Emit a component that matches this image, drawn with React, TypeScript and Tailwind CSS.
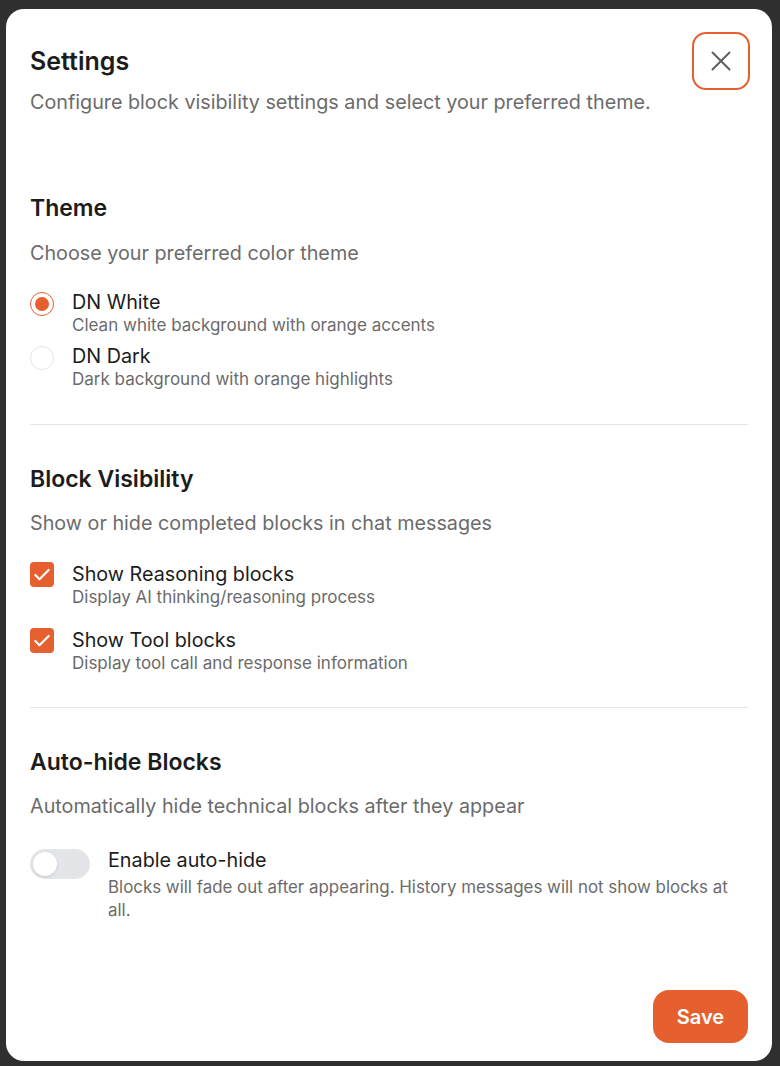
import { useState } from 'react';
import { Check } from 'lucide-react';

const ORANGE = 'bg-[#e5602e]';

function Radio({ checked, label, desc, onClick }: { checked: boolean; label: string; desc: string; onClick: () => void }) {
  return (
    <button onClick={onClick} className="flex items-start gap-[18px] text-left">
      <span
        className={`mt-[2px] w-6 h-6 shrink-0 rounded-full border flex items-center justify-center ${
          checked ? 'border-[#e5602e]' : 'border-[#e4e4e7]'
        }`}
      >
        {checked && <span className={`w-[14px] h-[14px] rounded-full ${ORANGE}`} />}
      </span>
      <span className="flex flex-col">
        <span className="text-[19.75px] leading-[24px] text-[#1c1c1c]">{label}</span>
        <span className="text-[17px] leading-[22px] text-[#6b6b6b]">{desc}</span>
      </span>
    </button>
  );
}

function Checkbox({ checked, label, desc, onClick }: { checked: boolean; label: string; desc: string; onClick: () => void }) {
  return (
    <button onClick={onClick} className="flex items-start gap-[18px] text-left">
      <span
        className={`w-6 h-[25px] shrink-0 rounded-[4px] flex items-center justify-center ${
          checked ? ORANGE : 'border border-[#d4d4d8]'
        }`}
      >
        {checked && <Check className="w-5 h-5 text-white" strokeWidth={2.6} />}
      </span>
      <span className="flex flex-col">
        <span className="text-[19.75px] leading-[24px] text-[#1c1c1c]">{label}</span>
        <span className="text-[17px] leading-[22px] text-[#6b6b6b]">{desc}</span>
      </span>
    </button>
  );
}

export default function App() {
  const [theme, setTheme] = useState<'white' | 'dark'>('white');
  const [reasoning, setReasoning] = useState(true);
  const [tool, setTool] = useState(true);
  const [autoHide, setAutoHide] = useState(false);

  return (
    <div className="min-h-screen bg-[#2f2f2f] pt-[9px] pl-[6px] pr-[8px] pb-[5px] font-['Inter','Noto_Sans',sans-serif]">
      <div className="relative bg-white rounded-[18px] h-[1052px] px-6 pt-[36px] flex flex-col">
        {/* close */}
        <button className="absolute top-[23px] right-[22px] w-[58px] h-[58px] rounded-[14px] border-2 border-[#e5602e] flex items-center justify-center text-[#5f5f5f]">
          <svg width="20" height="20" viewBox="0 0 20 20" fill="none" stroke="currentColor" strokeWidth="2" strokeLinecap="round">
            <path d="M1.5 1.5 18.5 18.5M18.5 1.5 1.5 18.5" />
          </svg>
        </button>

        <h1 className="text-[25px] leading-[32px] font-semibold text-[#1c1c1c]">Settings</h1>
        <p className="mt-[11px] text-[19.75px] leading-[28px] text-[#6b6b6b]">
          Configure block visibility settings and select your preferred theme.
        </p>

        {/* Theme */}
        <h2 className="mt-[78px] text-[23px] leading-[28px] font-semibold text-[#1c1c1c]">Theme</h2>
        <p className="mt-[17px] text-[19.75px] leading-[28px] text-[#6b6b6b]">Choose your preferred color theme</p>
        <div className="mt-[23px] flex flex-col gap-[8px]">
          <Radio
            checked={theme === 'white'}
            label="DN White"
            desc="Clean white background with orange accents"
            onClick={() => setTheme('white')}
          />
          <Radio
            checked={theme === 'dark'}
            label="DN Dark"
            desc="Dark background with orange highlights"
            onClick={() => setTheme('dark')}
          />
        </div>

        <div className="mt-[34px] h-px bg-[#e5e5e5]" />

        {/* Block Visibility */}
        <h2 className="mt-[40px] text-[23px] leading-[28px] font-semibold text-[#1c1c1c]">Block Visibility</h2>
        <p className="mt-[16px] text-[19.75px] leading-[28px] text-[#6b6b6b]">Show or hide completed blocks in chat messages</p>
        <div className="mt-[25px] flex flex-col gap-[20px]">
          <Checkbox
            checked={reasoning}
            label="Show Reasoning blocks"
            desc="Display AI thinking/reasoning process"
            onClick={() => setReasoning(!reasoning)}
          />
          <Checkbox
            checked={tool}
            label="Show Tool blocks"
            desc="Display tool call and response information"
            onClick={() => setTool(!tool)}
          />
        </div>

        <div className="mt-[33px] h-px bg-[#e5e5e5]" />

        {/* Auto-hide */}
        <h2 className="mt-[40px] text-[23px] leading-[28px] font-semibold text-[#1c1c1c]">Auto-hide Blocks</h2>
        <p className="mt-[16px] text-[19.75px] leading-[28px] text-[#6b6b6b]">Automatically hide technical blocks after they appear</p>
        <div className="mt-[28px] flex items-start gap-[18px]">
          <button
            onClick={() => setAutoHide(!autoHide)}
            className={`mt-[1px] w-[60px] h-[30px] shrink-0 rounded-full p-[3px] flex ${
              autoHide ? `${ORANGE} justify-end` : 'bg-[#e4e5e8] justify-start'
            }`}
          >
            <span className="w-6 h-6 rounded-full bg-white shadow-sm" />
          </button>
          <div className="flex flex-col">
            <span className="text-[19.75px] leading-[24px] text-[#1c1c1c]">Enable auto-hide</span>
            <span className="mt-[4px] text-[16.9px] leading-[23px] text-[#6b6b6b]">
              Blocks will fade out after appearing. History messages will not show blocks at all.
            </span>
          </div>
        </div>

        <div className="mt-auto mb-[18px] flex justify-end">
          <button className={`${ORANGE} text-white font-semibold text-[20px] rounded-[16px] w-[95px] h-[53px]`}>Save</button>
        </div>
      </div>
    </div>
  );
}
